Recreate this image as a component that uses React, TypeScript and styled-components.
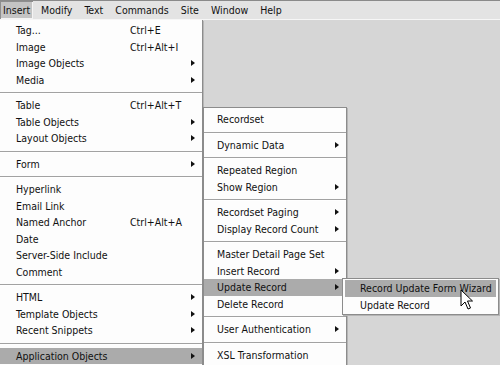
import React from "react";
import styled, { createGlobalStyle } from "styled-components";

const Global = createGlobalStyle`
  html, body { margin: 0; padding: 0; background: #d6d6d6; }
  body { font-family: "DejaVu Sans Condensed", "DejaVu Sans", sans-serif; }
`;

const Screen = styled.div`
  position: relative;
  width: 500px;
  height: 365px;
  overflow: hidden;
  background: #d6d6d6;
  font-family: "DejaVu Sans Condensed", "DejaVu Sans", sans-serif;
  font-size: 10.5px;
  color: #111;
`;

const MenuBar = styled.div`
  display: flex;
  align-items: stretch;
  height: 18px;
  background: #e3e3e3;
  border-top: 1px solid #8a8a8a;
  border-bottom: 1px solid #f6f6f6;
`;

const BarItem = styled.div<{ $open?: boolean }>`
  display: flex;
  align-items: center;
  padding: 0 ${(p) => (p.$open ? "3px" : "6px")};
  margin-right: ${(p) => (p.$open ? "2px" : "0")};
  background: ${(p) => (p.$open ? "#c4c4c4" : "transparent")};
  box-shadow: ${(p) => (p.$open ? "inset 1px 1px 0 #8e8e8e, inset -1px -1px 0 #f4f4f4" : "none")};
  font-size: 10.5px;
`;

const Menu = styled.div<{ $left: number; $top: number; $width: number; $pad: number }>`
  position: absolute;
  left: ${(p) => p.$left}px;
  top: ${(p) => p.$top}px;
  width: ${(p) => p.$width}px;
  background: #fdfdfd;
  border: 1px solid #8c8c8c;
  box-shadow: 1px 1px 0 #b5b5b5;
  padding: ${(p) => p.$pad}px 0 ${(p) => p.$pad}px;
  box-sizing: border-box;
`;

const MainMenu = styled(Menu)`
  border-left: none;
  border-top: none;
  padding-top: 2px;
  height: 360px;
`;

const SubMenu = styled(Menu)`
  height: 270px;
`;

const Item = styled.div<{ $active?: boolean; $indent: number; $inset: number }>`
  display: flex;
  align-items: center;
  height: 16.5px;
  margin: 0 ${(p) => p.$inset}px;
  padding-left: ${(p) => p.$indent}px;
  background: ${(p) => (p.$active ? "#ababab" : "transparent")};
  white-space: nowrap;
`;

const Label = styled.span<{ $w: number }>`
  width: ${(p) => p.$w}px;
  flex: none;
`;

const Shortcut = styled.span`
  flex: 1;
`;

const Arrow = styled.span<{ $x: number }>`
  position: absolute;
  left: ${(p) => p.$x}px;
  width: 0;
  height: 0;
  border-top: 3.5px solid transparent;
  border-bottom: 3.5px solid transparent;
  border-left: 4px solid #111;
`;

const ItemWrap = styled.div`
  position: relative;
`;

const Sep = styled.div<{ $inset: number }>`
  height: 1px;
  margin: 4px ${(p) => p.$inset}px 3px;
  background: #a2a2a2;
  border-bottom: 1px solid #ffffff;
`;

const Cursor = styled.svg`
  position: absolute;
  left: 460px;
  top: 289px;
`;

type Entry = { label?: string; shortcut?: string; sub?: boolean; active?: boolean; sep?: boolean };

const mainItems: Entry[] = [
  { label: "Tag...", shortcut: "Ctrl+E" },
  { label: "Image", shortcut: "Ctrl+Alt+I" },
  { label: "Image Objects", sub: true },
  { label: "Media", sub: true },
  { sep: true },
  { label: "Table", shortcut: "Ctrl+Alt+T" },
  { label: "Table Objects", sub: true },
  { label: "Layout Objects", sub: true },
  { sep: true },
  { label: "Form", sub: true },
  { sep: true },
  { label: "Hyperlink" },
  { label: "Email Link" },
  { label: "Named Anchor", shortcut: "Ctrl+Alt+A" },
  { label: "Date" },
  { label: "Server-Side Include" },
  { label: "Comment" },
  { sep: true },
  { label: "HTML", sub: true },
  { label: "Template Objects", sub: true },
  { label: "Recent Snippets", sub: true },
  { sep: true },
  { label: "Application Objects", sub: true, active: true },
];

const subItems: Entry[] = [
  { label: "Recordset" },
  { sep: true },
  { label: "Dynamic Data", sub: true },
  { sep: true },
  { label: "Repeated Region" },
  { label: "Show Region", sub: true },
  { sep: true },
  { label: "Recordset Paging", sub: true },
  { label: "Display Record Count", sub: true },
  { sep: true },
  { label: "Master Detail Page Set" },
  { label: "Insert Record", sub: true },
  { label: "Update Record", sub: true, active: true },
  { label: "Delete Record" },
  { sep: true },
  { label: "User Authentication", sub: true },
  { sep: true },
  { label: "XSL Transformation" },
];

const sub3Items: Entry[] = [
  { label: "Record Update Form Wizard", active: true },
  { label: "Update Record" },
];

function Items({ items, indent, inset, labelW, arrowX }: { items: Entry[]; indent: number; inset: number; labelW: number; arrowX: number }) {
  return (
    <>
      {items.map((e, i) =>
        e.sep ? (
          <Sep key={i} $inset={0} />
        ) : (
          <ItemWrap key={i}>
            <Item $active={e.active} $indent={indent} $inset={inset}>
              <Label $w={labelW}>{e.label}</Label>
              <Shortcut>{e.shortcut}</Shortcut>
              {e.sub && <Arrow $x={arrowX} />}
            </Item>
          </ItemWrap>
        )
      )}
    </>
  );
}

export default function App() {
  return (
    <Screen>
      <Global />
      <MenuBar>
        <BarItem $open>Insert</BarItem>
        <BarItem>Modify</BarItem>
        <BarItem>Text</BarItem>
        <BarItem>Commands</BarItem>
        <BarItem>Site</BarItem>
        <BarItem>Window</BarItem>
        <BarItem>Help</BarItem>
      </MenuBar>
      <MainMenu $left={0} $top={20} $width={203} $pad={2}>
        <Items items={mainItems} indent={16} inset={0} labelW={114} arrowX={191} />
      </MainMenu>
      <SubMenu $left={203} $top={107} $width={144} $pad={3}>
        <Items items={subItems} indent={13} inset={0} labelW={120} arrowX={131} />
      </SubMenu>
      <Menu $left={342} $top={278} $width={157} $pad={1}>
        <Items items={sub3Items} indent={15} inset={2} labelW={140} arrowX={0} />
      </Menu>
      <Cursor width="14" height="22" viewBox="0 0 14 22">
        <path d="M1 1 L1 17 L5 13 L8 20 L10.5 19 L7.5 12 L12.5 12 Z" fill="#fff" stroke="#000" strokeWidth="1" strokeLinejoin="round" />
      </Cursor>
    </Screen>
  );
}
